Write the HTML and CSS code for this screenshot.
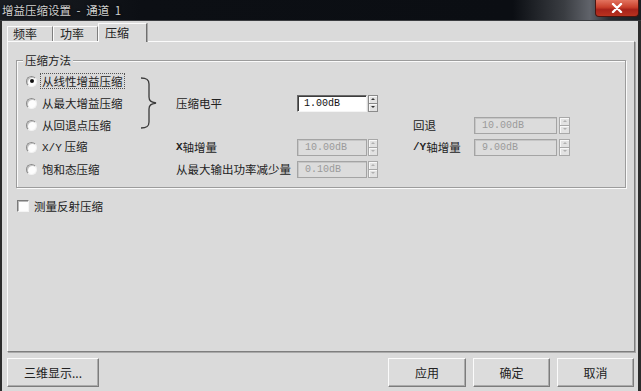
FILE: index.html
```html
<!DOCTYPE html>
<html lang="zh">
<head>
<meta charset="utf-8">
<title>增益压缩设置 - 通道 1</title>
<link rel="stylesheet" href="styles.css">
</head>
<body>
<div class="window">
  <div class="titlebar">
    <span class="title">增益压缩设置 - 通道 1</span>
    <div class="close">
      <svg width="12" height="10" viewBox="0 0 12 10"><path d="M2 1 L10 9 M10 1 L2 9" stroke="#fff" stroke-width="2.4" stroke-linecap="round"/></svg>
    </div>
  </div>
  <div class="client">
    <div class="tabs">
      <div class="tab t1">频率</div>
      <div class="tab t2">功率</div>
      <div class="tab active">压缩</div>
    </div>
    <div class="panel">
      <div class="group">
        <span class="legend">压缩方法</span>
        <div class="grid">
          <div class="opt r1"><span class="radio on"></span><span class="lbl focus">从线性增益压缩</span></div>
          <div class="opt r2"><span class="radio"></span><span class="lbl">从最大增益压缩</span></div>
          <div class="opt r3"><span class="radio"></span><span class="lbl">从回退点压缩</span></div>
          <div class="opt r4"><span class="radio"></span><span class="lbl"><span class="lat thin">X/Y</span>&nbsp;压缩</span></div>
          <div class="opt r5"><span class="radio"></span><span class="lbl">饱和态压缩</span></div>

          <svg class="brace" width="20" height="54" viewBox="0 0 20 54"><path d="M1 2 C6 2 9 3 9 8 L9 21 C9 25 11 26 16 27 C11 28 9 29 9 33 L9 46 C9 51 6 52 1 52" fill="none" stroke="#3a3a3a" stroke-width="1.3"/></svg>

          <div class="txt c3 r2">压缩电平</div>
          <div class="spin c4 r2"><div class="field">1.00dB</div><div class="arrows"><span class="up"></span><span class="dn"></span></div></div>

          <div class="txt c6 r3">回退</div>
          <div class="spin wide c7 r3"><div class="field dis">10.00dB</div><div class="arrows dis"><span class="up"></span><span class="dn"></span></div></div>

          <div class="txt c3 r4"><span class="lat">X</span>轴增量</div>
          <div class="spin c4 r4"><div class="field dis">10.00dB</div><div class="arrows dis"><span class="up"></span><span class="dn"></span></div></div>
          <div class="txt c6 r4"><span class="lat">/Y</span>轴增量</div>
          <div class="spin wide c7 r4"><div class="field dis">9.00dB</div><div class="arrows dis"><span class="up"></span><span class="dn"></span></div></div>

          <div class="txt c3 r5">从最大输出功率减少量</div>
          <div class="spin c4 r5"><div class="field dis">0.10dB</div><div class="arrows dis"><span class="up"></span><span class="dn"></span></div></div>
        </div>
      </div>
      <div class="check"><span class="box"></span><span>测量反射压缩</span></div>
    </div>
    <div class="buttons">
      <div class="btn b3d">三维显示...</div>
      <div class="spacer"></div>
      <div class="btn bapply">应用</div>
      <div class="btn bok">确定</div>
      <div class="btn bcancel">取消</div>
    </div>
  </div>
</div>
</body>
</html>
```

FILE: styles.css
```css
* { box-sizing: border-box; }
html, body { margin: 0; padding: 0; }
body {
  width: 641px;
  height: 391px;
  overflow: hidden;
  background: #dadada;
  font-family: "Noto Sans CJK SC", "Noto Sans", sans-serif;
  font-size: 11.5px;
  color: #222;
}
.window {
  width: 641px;
  height: 391px;
  display: flex;
  flex-direction: column;
}
.titlebar {
  height: 21px;
  flex: none;
  display: flex;
  align-items: flex-start;
  background: linear-gradient(90deg, #1a1d22 0%, #0c0f14 22%, #0b0e13 80%, #3a3d42 88%, #60636a 92%, #2a2d32 95%, #1b1e22 100%);
  border-bottom: 1px solid #3a3c40;
}
.title {
  padding-left: 2px;
  line-height: 20px;
  font-size: 11.5px;
  word-spacing: 3px;
  color: #d0d0d0;
  text-shadow: 0 0 3px #000;
  white-space: nowrap;
}
.close {
  margin-left: auto;
  margin-right: 2px;
  width: 44px;
  height: 17px;
  background: linear-gradient(180deg, #e2735f 0%, #c9402c 45%, #a8231a 60%, #b8321f 100%);
  border: 1px solid #4a1510;
  border-top: none;
  border-radius: 0 0 4px 4px;
  display: flex;
  align-items: center;
  justify-content: center;
}
.client {
  flex: 1;
  display: flex;
  flex-direction: column;
  border-left: 2px solid #2c2c2c;
  border-right: 3px solid #2c2c2c;
  padding: 3px 3px 0 5px;
}
.tabs {
  height: 17px;
  display: flex;
  align-items: flex-end;
  flex: none;
}
.tab {
  height: 15px;
  line-height: 14px;
  padding-left: 5px;
  border-top: 1px solid #fbfbfb;
  border-left: 1px solid #fbfbfb;
  border-right: 1px solid #7e7e7e;
  white-space: nowrap;
  font-size: 12px;
}
.t1 { width: 46px; }
.t2 { width: 45px; padding-left: 6px; }
.tab.active {
  width: 49px;
  height: 19px;
  line-height: 17px;
  margin-bottom: -1px;
  padding-left: 6px;
  background: #dadada;
  position: relative;
  z-index: 1;
  border-right: 1px solid #6e6e6e;
  box-shadow: 1px 0 0 #a8a8a8;
}
.panel {
  height: 311px;
  flex: none;
  border: 1px solid;
  border-color: #fbfbfb #7e7e7e #7e7e7e #fbfbfb;
  box-shadow: 1px 1px 0 #a9a9a9;
  padding: 18px 8px 0 8px;
}
.group {
  position: relative;
  height: 128px;
  border: 1px solid #9c9c9c;
  box-shadow: inset 1px 1px 0 #fafafa, 1px 1px 0 #fafafa;
  padding: 9px 0 7px 9px;
}
.legend {
  position: absolute;
  top: -9px;
  left: 6px;
  padding: 0 2px;
  line-height: 16px;
  background: #dadada;
}
.grid {
  display: grid;
  grid-template-columns: 116px 34px 121px 81px 35px 61px 96px;
  grid-template-rows: repeat(5, 22px);
}
.opt {
  grid-column: 1;
  display: flex;
  align-items: center;
  gap: 5px;
  white-space: nowrap;
}
.r1 { grid-row: 1; }
.r2 { grid-row: 2; }
.r3 { grid-row: 3; }
.r4 { grid-row: 4; }
.r5 { grid-row: 5; }
.c3 { grid-column: 3; }
.c4 { grid-column: 4; }
.c6 { grid-column: 6; }
.c7 { grid-column: 7; }
.radio {
  width: 11px;
  height: 11px;
  flex: none;
  border-radius: 50%;
  background: #fdfdfd;
  border: 1px solid;
  border-color: #8a8a8a #f2f2f2 #f2f2f2 #8a8a8a;
  box-shadow: inset 1px 1px 0 #c4c4c4;
  display: flex;
  align-items: center;
  justify-content: center;
}
.radio.on::after {
  content: "";
  width: 4px;
  height: 4px;
  border-radius: 50%;
  background: #111;
}
.lbl { line-height: 14px; }
.lbl.focus {
  border: 1px dotted #555;
  padding: 0 1px;
  margin-left: -2px;
}
.lat {
  font-family: "Liberation Mono", monospace;
  font-weight: bold;
  font-size: 11px;
}
.lat.thin { font-weight: normal; }
.brace {
  grid-column: 2;
  grid-row: 1 / 4;
  align-self: start;
  margin-top: 6px;
  margin-left: -2px;
}
.txt {
  display: flex;
  align-items: center;
  white-space: nowrap;
}
.spin {
  display: flex;
  align-items: center;
  gap: 1px;
}
.field {
  width: 70px;
  height: 17px;
  background: #fff;
  border: 1px solid;
  border-color: #6a6a6a #f4f4f4 #f4f4f4 #6a6a6a;
  box-shadow: inset 1px 1px 0 #3c3c3c;
  font-family: "Liberation Mono", monospace;
  font-size: 10px;
  line-height: 15px;
  padding-left: 6px;
  color: #111;
}
.field.dis {
  background: #dcdcdc;
  color: #9a9a9a;
  border: 1px solid #a4a4a4;
  box-shadow: inset 1px 1px 0 #c6c6c6;
  padding-left: 7px;
}
.wide { gap: 2px; }
.wide .field { width: 83px; }
.arrows {
  width: 10px;
  height: 17px;
  display: flex;
  flex-direction: column;
  border: 1px solid #8a8a8a;
  background: #e2e2e2;
}
.wide .arrows { width: 11px; }
.arrows span {
  flex: 1;
  display: flex;
  align-items: center;
  justify-content: center;
  box-shadow: inset 1px 1px 0 #f8f8f8;
}
.arrows .dn { border-top: 1px solid #8a8a8a; }
.arrows span::after {
  content: "";
  width: 0;
  height: 0;
  border-left: 2px solid transparent;
  border-right: 2px solid transparent;
}
.arrows .up::after { border-bottom: 2px solid #333; }
.arrows .dn::after { border-top: 2px solid #333; }
.arrows.dis { border-color: #a8a8a8; }
.arrows.dis .dn { border-top-color: #a8a8a8; }
.arrows.dis .up::after { border-bottom-color: #b0b0b0; }
.arrows.dis .dn::after { border-top-color: #b0b0b0; }
.check {
  margin-top: 11px;
  margin-left: 1px;
  display: flex;
  align-items: center;
  gap: 5px;
  line-height: 14px;
}
.box {
  width: 12px;
  height: 12px;
  background: #fdfdfd;
  border: 1px solid;
  border-color: #7a7a7a #f4f4f4 #f4f4f4 #7a7a7a;
  box-shadow: inset 1px 1px 0 #b8b8b8;
}
.buttons {
  margin-top: 6px;
  height: 29px;
  flex: none;
  display: flex;
  gap: 7px;
  padding-right: 1px;
}
.spacer { flex: 1; }
.btn {
  width: 77px;
  height: 29px;
  display: flex;
  align-items: center;
  justify-content: center;
  background: #dcdcdc;
  border: 1px solid;
  border-color: #fbfbfb #7c7c7c #7c7c7c #fbfbfb;
  box-shadow: inset -1px -1px 0 #ababab;
  font-size: 12px;
  color: #222;
}
.b3d { width: 92px; }
.bapply { width: 78px; }
```
